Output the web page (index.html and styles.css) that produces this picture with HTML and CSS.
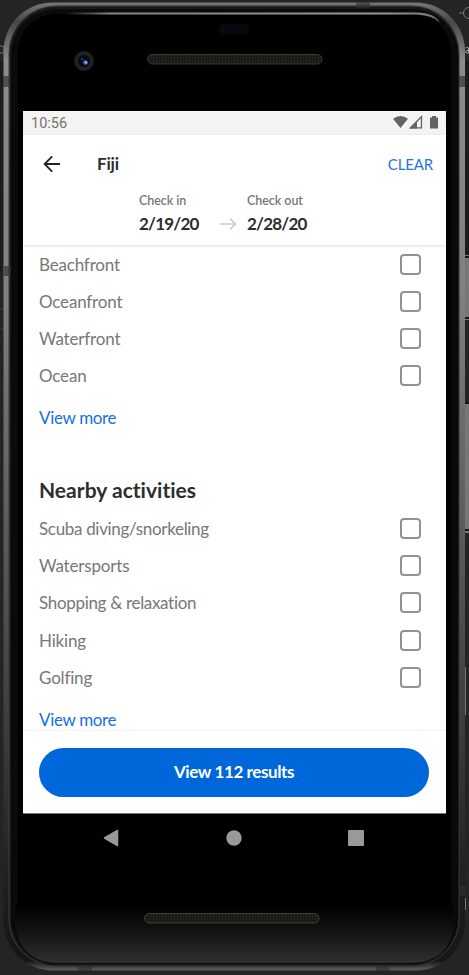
FILE: index.html
```html
<!DOCTYPE html>
<html lang="en">
<head>
<meta charset="utf-8">
<meta name="viewport" content="width=device-width, initial-scale=1">
<title>Fiji</title>
<link rel="stylesheet" href="styles.css">
</head>
<body>
<div class="stage">
  <svg class="shell" width="469" height="975" viewBox="0 0 469 975" aria-hidden="true">
    <defs>
      <linearGradient id="metal" x1="0" y1="0" x2="0" y2="1">
        <stop offset="0" stop-color="#777"/><stop offset=".02" stop-color="#484848"/><stop offset=".06" stop-color="#8c8c8c"/><stop offset=".3" stop-color="#808080"/>
        <stop offset=".5" stop-color="#626262"/><stop offset=".75" stop-color="#3c3c3c"/><stop offset=".93" stop-color="#1c1c1c"/><stop offset=".99" stop-color="#161616"/><stop offset="1" stop-color="#606060"/>
      </linearGradient>
      <linearGradient id="glow" x1="0" y1="0" x2="0" y2="1">
        <stop offset="0" stop-color="#000"/><stop offset=".4" stop-color="#101010"/><stop offset="1" stop-color="#303030"/>
      </linearGradient>
      <linearGradient id="shine" x1="0" y1="0" x2="1" y2="0">
        <stop offset="0" stop-color="#7d8686" stop-opacity="0"/><stop offset=".12" stop-color="#7d8686"/><stop offset=".85" stop-color="#909a9a"/><stop offset="1" stop-color="#aab4b4" stop-opacity=".6"/>
      </linearGradient>
      <pattern id="mesh" width="3" height="3" patternUnits="userSpaceOnUse">
        <rect width="3" height="3" fill="#1b1916"/><rect width="1" height="2" fill="#2b2824"/>
      </pattern>
      <filter id="soft"><feGaussianBlur stdDeviation="2"/></filter>
    </defs>
    <rect width="469" height="975" fill="#242424"/>
    <path d="M0 61h469v211H0z" fill="#1c1c1c"/>
    <path d="M0 309h5M0 329h5" stroke="#383838"/>
    <circle cx="469" cy="13" r="5.5" fill="none" stroke="#777"/>
    <path d="M459 13h5" stroke="#777"/>
    <path d="M0 46h2q2 0 2 2v3q0 2-2 2H0" fill="none" stroke="#777"/>
    <path d="M465.500 48q3-2 3 1v4h-2q-2-1 0-2.500h2" fill="none" stroke="#aaa"/>
    <path d="M464 255h5v65h-5zM464 402h5v131h-5z" fill="#777"/>
    <path d="M464 257h5M464 318h5M464 403h5M464 530h5" stroke="#161616" stroke-width="2"/>
    <path d="M465.500 667v48M465.500 898v12" stroke="#777"/>
    <rect x="3.500" y="2.500" width="461.500" height="968" rx="49" fill="url(#metal)"/>
    <rect x="9" y="6" width="450" height="960" rx="47" fill="#1e1e1e" stroke="#3c3c3c"/>
    <rect x="11" y="8.500" width="447" height="956" rx="46" fill="#000" stroke="#181818"/>
    <rect x="15" y="11" width="439" height="951" rx="42" fill="none" stroke="#151515" stroke-width="3" filter="url(#soft)"/>
    <path d="M15 905h439v13c0 30-16 45-45 45H59c-29 0-44-17-44-45z" fill="url(#glow)"/>
    <rect x="20" y="14" width="430" height="870" rx="35" fill="#000"/>
    <path d="M20 840h430v66H20z" fill="#000"/>
    <path d="M65 12.500H417q17 0 23 10-7-7-23-8H65z" fill="url(#shine)"/>
    <path d="M3 76h7v11H3zM459 76h6v11h-6zM4 266h7v10H4zM459 886h6v10h-6zM356 2.500h14V8h-14zM78 966h14v5H78zM376 966h14v5h-14z" fill="#303030" fill-opacity=".65"/>
    <rect x="219" y="24" width="30" height="10.500" rx="5" fill="#080910"/>
    <circle cx="84" cy="61" r="10" fill="#202020"/>
    <circle cx="84" cy="61" r="6" fill="#090a18"/>
    <circle cx="85.500" cy="62.500" r="2.300" fill="#5266c5"/><circle cx="86" cy="62.500" r="1.100" fill="#b0baff"/>
    <circle cx="82" cy="59" r="1" fill="#344597"/>
    <rect x="147.500" y="54.500" width="174.500" height="9.500" rx="4.700" fill="url(#mesh)" stroke="#3b3936"/>
    <rect x="144.500" y="913.500" width="174.500" height="9.500" rx="4.700" fill="url(#mesh)" stroke="#403e3a"/>
  </svg>
  <main class="screen">
    <div class="status">
      <span>10:56</span>
      <svg width="46" height="15" viewBox="0 0 46 15" fill="#636363" aria-hidden="true">
        <path d="M0 3.700Q7.500-1.800 15 3.700L7.500 13z"/>
        <path d="M28.500 1.700v11.200H17.400z" fill="none" stroke="#636363" stroke-width="1.300"/><path d="M16.500 13.500 24 5.800v7.700z"/>
        <path d="M37 2.500h2V1h4v1.500h2v11h-8z"/>
      </svg>
    </div>
    <header class="header">
      <div class="bar">
        <svg class="back" width="18" height="18" viewBox="0 0 18 18" fill="none" stroke="#252525" stroke-width="1.900" aria-hidden="true"><path d="M17 9H2M9.200 1.300 1.600 9l7.600 7.700"/></svg>
        <h1>Fiji</h1>
        <a class="clear">CLEAR</a>
      </div>
      <div class="dates">
        <div class="date"><small>Check in</small><strong>2/19/20</strong></div>
        <svg class="arrow" width="18" height="14" viewBox="0 0 18 14" fill="none" stroke="#c7cbd0" stroke-width="1.600" aria-hidden="true"><path d="M1 7h15.500M11 1.500 16.500 7 11 12.500"/></svg>
        <div class="date"><small>Check out</small><strong>2/28/20</strong></div>
      </div>
    </header>
    <section class="list">
      <label class="row">Beachfront<i class="box"></i></label>
      <label class="row">Oceanfront<i class="box"></i></label>
      <label class="row">Waterfront<i class="box"></i></label>
      <label class="row">Ocean<i class="box"></i></label>
      <a class="more">View more</a>
      <h2>Nearby activities</h2>
      <label class="row"><span class="tight">Scuba diving/snorkeling</span><i class="box"></i></label>
      <label class="row">Watersports<i class="box"></i></label>
      <label class="row"><span class="tight">Shopping &amp; relaxation</span><i class="box"></i></label>
      <label class="row">Hiking<i class="box"></i></label>
      <label class="row">Golfing<i class="box"></i></label>
      <a class="more">View more</a>
    </section>
    <footer class="footer"><button class="results">View 112 results</button></footer>
  </main>
  <nav class="nav">
    <svg width="16" height="18" viewBox="0 0 16 18"><path d="M14.500 1.500v15L1.500 9z" fill="#999" stroke="#999" stroke-width="1.500" stroke-linejoin="round"/></svg>
    <svg width="16" height="16" viewBox="0 0 16 16"><circle cx="8" cy="8" r="7.700" fill="#999"/></svg>
    <svg width="16" height="16" viewBox="0 0 16 16"><rect width="16" height="16" rx="1" fill="#999"/></svg>
  </nav>
</div>
</body>
</html>
```
FILE: styles.css
```css
* { box-sizing: border-box; }
body { margin: 0; background: #242424; font-family: Lato, "Liberation Sans", sans-serif; font-variant-ligatures: none; }
.stage { position: relative; width: 469px; height: 975px; padding: 111px 23px 0; overflow: hidden; }
.shell { position: absolute; inset: 0; }
.screen { position: relative; width: 423px; height: 702px; display: flex; flex-direction: column; background: #fff; overflow: hidden; box-shadow: 0 1px #777; }
.status { height: 24px; flex: none; display: flex; justify-content: space-between; padding: 4px 7px 0 8px; background: #f4f3f1; color: #737373; font: 14.5px/18px Roboto, sans-serif; }
.header { position: relative; height: 110px; flex: none; background: #fff; box-shadow: 0 1px 3px #00000024; }
.bar { height: 58px; display: flex; align-items: center; padding: 0 13px 0 20px; }
h1 { margin: 0 0 0 36px; font-size: 17px; line-height: 22px; color: #2d2d2d; letter-spacing: -.2px; }
.clear { margin-left: auto; font-size: 15px; letter-spacing: -.15px; color: #2874dc; }
.dates { display: flex; padding-left: 116px; }
.date { width: 60px; display: flex; flex-direction: column; color: #2d2d2d; white-space: nowrap; }
.date small { font-size: 12.5px; line-height: 16px; font-weight: 600; letter-spacing: -.05px; color: #777; }
.date strong { font-size: 17px; line-height: 22px; margin-top: 4px; letter-spacing: -.8px; }
.arrow { flex: none; margin: 24px 9px 0 20px; }
.dates .date:last-child { margin-left: 1px; }
.list { flex: 1; min-height: 0; overflow: hidden; padding: .5px 25px 0 16px; color: #777; font-size: 17px; letter-spacing: -.18px; }
.row { height: 37.15px; display: flex; align-items: center; justify-content: space-between; }
.tight { letter-spacing: -.32px; }
.box { width: 21px; height: 21px; border: 2px solid #929292; border-radius: 4px; }
.more { display: block; margin-top: 12px; line-height: 24px; letter-spacing: -.34px; color: #1870de; }
h2 { margin: 45px 0 5px; font-size: 21px; line-height: 30px; color: #2d2d2d; letter-spacing: .02px; }
.footer { position: relative; height: 82px; flex: none; padding: 17px 17px 16px 16px; background: #fff; box-shadow: 0 -1px 2px #00000010; }
.results { display: block; width: 390px; height: 49px; padding: 0 0 2px; border: 0; border-radius: 25px; background: #0067db; color: #fff; font: 700 17px/46px Lato, sans-serif; letter-spacing: -.4px; }
.nav { position: relative; width: 261px; height: 18px; margin: 16px 0 0 80px; display: flex; justify-content: space-between; align-items: center; }
```
